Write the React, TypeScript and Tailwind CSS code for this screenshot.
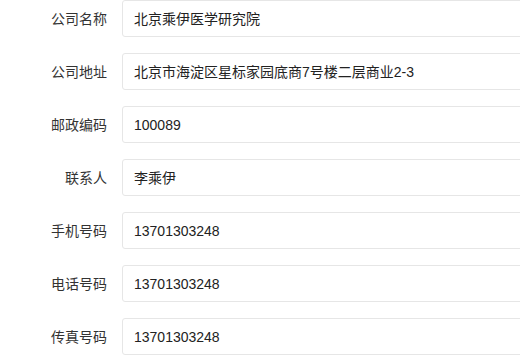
import React from "react";

const rows: [string, string][] = [
  ["公司名称", "北京乘伊医学研究院"],
  ["公司地址", "北京市海淀区星标家园底商7号楼二层商业2-3"],
  ["邮政编码", "100089"],
  ["联系人", "李乘伊"],
  ["手机号码", "13701303248"],
  ["电话号码", "13701303248"],
  ["传真号码", "13701303248"],
];

export default function App() {
  return (
    <div
      className="w-[520px] h-[362px] overflow-hidden bg-white text-[14px] text-[#333]"
      style={{ fontFamily: '"Liberation Sans", "Noto Sans CJK SC", sans-serif' }}
    >
      <div className="flex flex-col gap-[16px] pt-0">
        {rows.map(([label, value]) => (
          <div key={label} className="flex items-center">
            <div className="w-[107px] shrink-0 text-right text-[#333] pt-[2px]">{label}</div>
            <div className="ml-[15px] w-[440px] shrink-0 h-[37px] border border-[#e6e6e6] rounded-[3px] flex items-center pl-[11px] pt-[2px] text-[#222]">
              {value}
            </div>
          </div>
        ))}
      </div>
    </div>
  );
}
